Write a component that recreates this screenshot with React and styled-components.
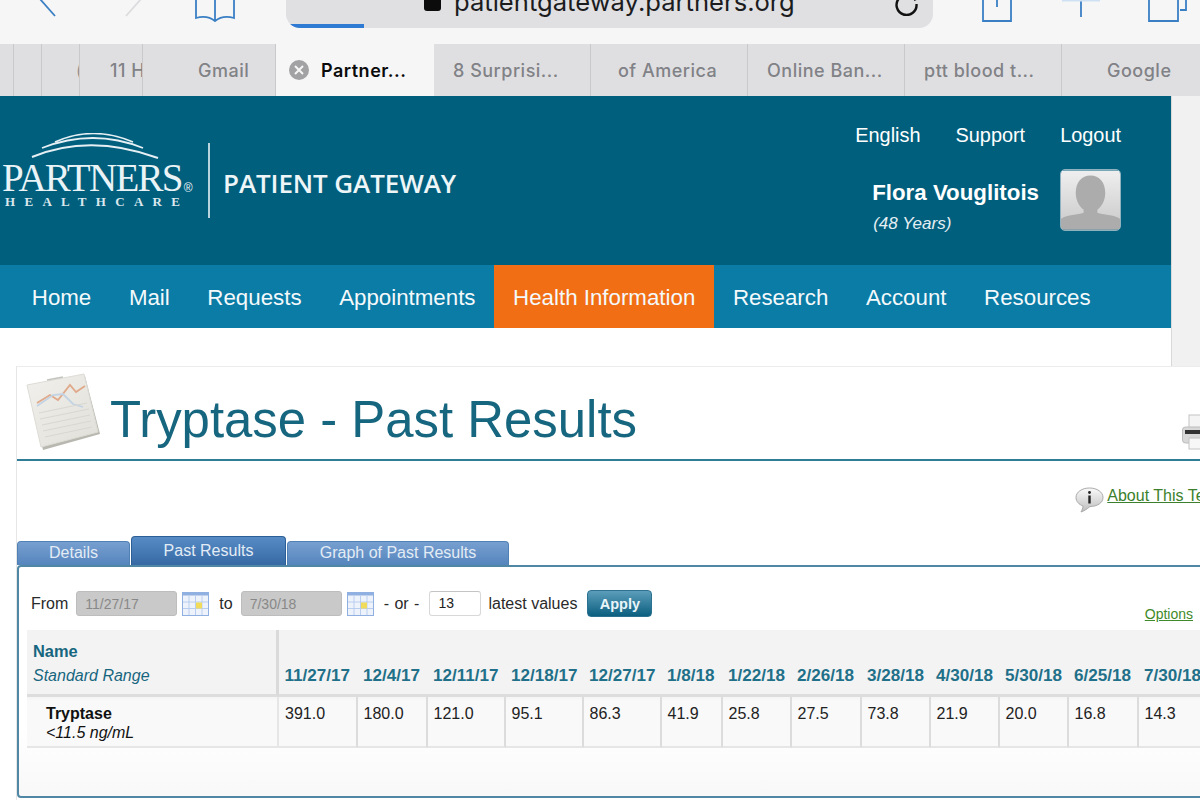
import React from "react";
import styled, { createGlobalStyle } from "styled-components";

const GlobalStyle = createGlobalStyle`
  html, body {
    margin: 0;
    width: 1200px;
    height: 800px;
    overflow: hidden;
    background: #f1f1f2;
    font-family: "Liberation Sans", Arial, sans-serif;
  }
`;

const Toolbar = styled.div`
  display: flex;
  height: 44px;
  overflow: hidden;
  background: #f6f6f7;
`;

const ToolIcon = styled.svg`
  flex: none;
  margin-left: ${(p) => p.$gap}px;
  fill: none;
  stroke: ${(p) => p.$stroke || "#3a7fc4"};
  stroke-width: 1.8;
`;

const UrlBar = styled.div`
  position: relative;
  flex: none;
  display: flex;
  align-items: flex-start;
  width: 647px;
  height: 28px;
  margin-left: 50px;
  overflow: hidden;
  background: #e0e0e3;
  border-radius: 0 0 14px 14px;
`;

const Lock = styled.span`
  width: 17px;
  height: 11px;
  margin-left: 138px;
  background: #0c0c0c;
  border-radius: 0 0 3px 3px;
`;

const UrlText = styled.span`
  margin: -13px 0 0 13px;
  font-family: Inter, "Liberation Sans", sans-serif;
  font-size: 25.6px;
  line-height: 30px;
  color: #1c1c1e;
`;

const Reload = styled.svg`
  margin: 0 0 0 100px;
  fill: none;
  stroke: #111;
  stroke-width: 2.4;
`;

const Progress = styled.span`
  position: absolute;
  left: 0;
  bottom: 0;
  width: 78px;
  height: 4px;
  background: #2f7bd3;
`;

const TabStrip = styled.div`
  display: flex;
  height: 52px;
  overflow: hidden;
  background: #dfdfe2;
`;

const BrowserTab = styled.div`
  flex: none;
  display: flex;
  align-items: center;
  box-sizing: border-box;
  width: ${(p) => p.$width}px;
  padding-left: ${(p) => p.$pad || 0}px;
  overflow: hidden;
  white-space: nowrap;
  border-right: 1px solid ${(p) => (p.$active ? "transparent" : "#c9c9cc")};
  background: ${(p) => (p.$active ? "#f6f6f7" : "transparent")};
  font-family: Inter, "Liberation Sans", sans-serif;
  font-size: 18px;
  font-weight: ${(p) => (p.$active ? 600 : 500)};
  letter-spacing: 0.5px;
  color: ${(p) => (p.$active ? "#0b0b0b" : "#818286")};
`;

const CloseDot = styled.svg`
  flex: none;
  margin-right: 12px;
`;

const ClippedGlyph = styled.span`
  margin-left: 34px;
  color: #8f8f93;
`;

const Sheet = styled.div`
  box-sizing: border-box;
  width: 1172px;
  height: 704px;
  border-right: 1px solid #d9d9d9;
  background: #fff;
`;

const Header = styled.header`
  display: flex;
  justify-content: space-between;
  height: 169px;
  background: #015f7e;
  color: #fff;
`;

const Brand = styled.div`
  display: flex;
  align-items: center;
`;

const BrandMark = styled.div`
  display: flex;
  flex-direction: column;
  width: 204px;
  padding: 0 0 19px 2px;
  box-sizing: content-box;
`;

const Arcs = styled.svg`
  margin-left: 29px;
  fill: none;
  stroke: #e6f0f4;
`;

const BrandName = styled.div`
  margin-top: 2px;
  font-family: "Liberation Serif", serif;
  font-size: 39px;
  line-height: 34px;
  letter-spacing: -1.7px;
  white-space: nowrap;
  color: #eaf3f6;

  sup {
    font-family: "Liberation Sans", sans-serif;
    font-size: 12px;
    letter-spacing: 0;
    line-height: 0;
    vertical-align: -1px;
    margin-left: 2px;
  }
`;

const BrandSub = styled.div`
  margin-left: 3px;
  font-family: "Liberation Serif", serif;
  font-size: 13px;
  font-weight: 700;
  line-height: 14px;
  letter-spacing: 9.3px;
  white-space: nowrap;
  color: #dbe8ed;
`;

const BrandRule = styled.div`
  width: 2px;
  height: 75px;
  margin-left: 2px;
  background: #b9d3dc;
`;

const BrandTitle = styled.div`
  margin: 4px 0 0 13px;
  font-family: "Open Sans", sans-serif;
  font-size: 26px;
  font-weight: 600;
  letter-spacing: -0.1px;
  white-space: nowrap;
  color: #eef6f8;
`;

const Account = styled.div`
  display: flex;
  flex-direction: column;
  align-items: flex-end;
  padding: 27px 50px 0 0;
`;

const AccountLinks = styled.div`
  display: flex;
  gap: 35px;
  font-size: 19.9px;
  line-height: 24px;
`;

const UserRow = styled.div`
  display: flex;
  gap: 21px;
  margin-top: 22px;
`;

const UserText = styled.div`
  padding-top: 10px;
`;

const UserName = styled.div`
  font-size: 22.3px;
  line-height: 28px;
  font-weight: 700;
`;

const UserAge = styled.div`
  margin: 7px 0 0 1px;
  font-size: 17px;
  line-height: 20px;
  font-style: italic;
  color: #e5eff3;
`;

const Avatar = styled.svg`
  display: block;
  border: 1px solid #8fb2c0;
  border-radius: 5px;
`;

const Nav = styled.nav`
  display: flex;
  height: 63px;
  padding-left: 13px;
  background: #0a7ca6;
`;

const NavItem = styled.a`
  display: flex;
  align-items: center;
  padding: 2px 18.8px 0;
  font-size: 22.3px;
  color: #f4f9fb;
  background: ${(p) => (p.$active ? "#f26e14" : "transparent")};
`;

const Panel = styled.main`
  box-sizing: border-box;
  width: 1240px;
  height: 440px;
  margin: 38px 0 0 16px;
  border-top: 1px solid #ececec;
  border-left: 1px solid #e6e6e6;
  background: #fff;
`;

const TitleRow = styled.div`
  display: flex;
  align-items: center;
  height: 92px;
  padding: 0 34px 0 8px;
  border-bottom: 2px solid #2f7d96;
  box-sizing: content-box;
  margin-bottom: -1px;
`;

const Title = styled.h1`
  margin: 12px 0 0 9px;
  font-size: 50.9px;
  font-weight: 400;
  color: #17667f;
`;

const Printer = styled.svg`
  margin: 38px 0 0 auto;
`;

const AboutRow = styled.div`
  display: flex;
  justify-content: flex-end;
  align-items: center;
  gap: 3px;
  box-sizing: border-box;
  height: 75px;
  padding: 4px 39px 0 0;
`;

const AboutLink = styled.a`
  margin-top: -7px;
  font-size: 16px;
  color: #3c7f2c;
  text-decoration: underline;
`;

const TabRow = styled.div`
  display: flex;
  align-items: flex-end;
  gap: 1px;
  height: 30px;
`;

const PageTab = styled.div`
  box-sizing: border-box;
  width: ${(p) => p.$width}px;
  height: ${(p) => (p.$active ? 29 : 24)}px;
  padding-top: ${(p) => (p.$active ? 5 : 2)}px;
  text-align: center;
  font-size: 16px;
  line-height: 18px;
  color: #e3ecf5;
  border: 1px solid ${(p) => (p.$active ? "#2c5f95" : "#4f81b5")};
  border-bottom: 0;
  border-radius: 4px 4px 0 0;
  background: ${(p) =>
    p.$active
      ? "linear-gradient(#568bc5, #376aa5)"
      : "linear-gradient(#779fd0, #5585bd)"};
`;

const ResultsBox = styled.section`
  box-sizing: border-box;
  height: 233px;
  border: 2px solid #4f87a5;
  border-radius: 4px;
  background: linear-gradient(#fff 70%, #f8f8f8);
`;

const FilterRow = styled.div`
  display: flex;
  align-items: center;
  width: 1174px;
  height: 63px;
  padding: 10px 0 0 12px;
  box-sizing: border-box;
  font-size: 16px;
  color: #2a2a2a;
`;

const DateField = styled.div`
  box-sizing: border-box;
  width: 101px;
  height: 25px;
  margin: 0 5px 0 8px;
  padding-left: 8px;
  font-size: 14px;
  line-height: 25px;
  color: #888;
  background: #c9c9c9;
  border: 1px solid #bdbdbd;
  border-radius: 3px;
`;

const CalendarIcon = styled.svg`
  flex: none;
  margin-right: 10px;
`;

const OrLabel = styled.span`
  word-spacing: 1px;
`;

const CountField = styled.div`
  box-sizing: border-box;
  width: 52px;
  height: 25px;
  margin: 0 7px 0 10px;
  padding-left: 8px;
  font-size: 14px;
  line-height: 23px;
  color: #222;
  background: #fff;
  border: 1px solid #d8d8d8;
  border-top-color: #c4c4c4;
  border-radius: 3px;
`;

const ApplyButton = styled.button`
  width: 65px;
  height: 27px;
  margin-left: 10px;
  padding: 0;
  font-family: inherit;
  font-size: 14.5px;
  font-weight: 700;
  color: #e9f5f9;
  background: linear-gradient(#5b9dba, #0c5f80);
  border: 1px solid #2c7190;
  border-radius: 4px;
`;

const OptionsLink = styled.a`
  margin: 20px 0 0 auto;
  font-size: 14px;
  color: #3f8a2a;
  text-decoration: underline;
`;

const ResultsGrid = styled.div`
  display: grid;
  grid-template-columns: 252px 78.5px 70px 78px 78px 78px 61px 69px 70px 69px 69px 69px 70px 81px;
  grid-template-rows: 67px 51px;
  margin-left: 8px;
  background: linear-gradient(#f3f3f4 56%, #f9f9f9 60%);
`;

const HeadName = styled.div`
  box-sizing: border-box;
  padding: 10px 0 0 6px;
  font-size: 16px;
  line-height: 22px;
  color: #17667f;
  border-right: 3px solid #dadada;
  border-bottom: 3px solid #dddddd;

  strong,
  em {
    display: block;
  }
  strong {
    font-size: 16.4px;
  }
  em {
    margin-top: 3px;
  }
`;

const HeadDate = styled.div`
  box-sizing: border-box;
  padding: 35px 0 0 5.5px;
  font-size: 17.1px;
  line-height: 22px;
  font-weight: 700;
  white-space: nowrap;
  color: #1f7088;
  border-bottom: 3px solid #dddddd;
`;

const RowName = styled.div`
  box-sizing: border-box;
  padding: 7px 0 0 19px;
  font-size: 16px;
  line-height: 19px;
  color: #111;
  border-right: 2px solid #e6e6e6;
  border-bottom: 2px solid #e6e6e6;

  strong,
  em {
    display: block;
  }
`;

const RowValue = styled.div`
  box-sizing: border-box;
  padding: 7px 0 0 6px;
  font-size: 16px;
  line-height: 19px;
  color: #222;
  border-right: ${(p) => (p.$last ? "0" : "2px solid #dcdcdc")};
  border-bottom: 2px solid #e6e6e6;
`;

const browserTabs = [
  { width: 14 },
  { width: 28 },
  { width: 38, glyph: "(" },
  { width: 63, label: "11 H", pad: 30 },
  { width: 133, label: "Gmail", pad: 55 },
  { width: 158, label: "Partner...", active: true, pad: 13 },
  { width: 157, label: "8 Surprisi...", pad: 19 },
  { width: 157, label: "of America", pad: 27 },
  { width: 157, label: "Online Ban...", pad: 19 },
  { width: 157, label: "ptt blood t...", pad: 19 },
  { width: 158, label: "Google", pad: 45 },
];

const navItems = ["Home", "Mail", "Requests", "Appointments", "Health Information", "Research", "Account", "Resources"];

const results = [
  ["11/27/17", "391.0"],
  ["12/4/17", "180.0"],
  ["12/11/17", "121.0"],
  ["12/18/17", "95.1"],
  ["12/27/17", "86.3"],
  ["1/8/18", "41.9"],
  ["1/22/18", "25.8"],
  ["2/26/18", "27.5"],
  ["3/28/18", "73.8"],
  ["4/30/18", "21.9"],
  ["5/30/18", "20.0"],
  ["6/25/18", "16.8"],
  ["7/30/18", "14.3"],
];

const Calendar = () => (
  <CalendarIcon width="27" height="24" viewBox="0 0 27 24">
    <rect x="0.5" y="0.5" width="26" height="23" fill="#eef3fb" stroke="#8fb0e0" />
    <rect x="0.5" y="0.5" width="26" height="3" fill="#8fb0e0" />
    <path d="M7 4v19M13.5 4v19M20 4v19M1 10h25M1 16.5h25" stroke="#b9cdee" strokeWidth="1" />
    <rect x="14" y="10.5" width="6" height="6" fill="#f0dc5a" />
  </CalendarIcon>
);

const App = () => (
  <>
    <GlobalStyle />
    <Toolbar>
      <ToolIcon $gap={38} width="18" height="18" viewBox="0 0 18 18">
        <path d="M2 -1 17 16" />
      </ToolIcon>
      <ToolIcon $gap={69} $stroke="#dcdcde" width="18" height="18" viewBox="0 0 18 18">
        <path d="M16 -1 1 16" />
      </ToolIcon>
      <ToolIcon $gap={51} width="42" height="24" viewBox="0 0 42 24">
        <path d="M2 0v18c7-2 14-1 19 3 5-4 12-5 19-3V0M21 0v21" />
      </ToolIcon>
      <UrlBar>
        <Lock />
        <UrlText>patientgateway.partners.org</UrlText>
        <Reload width="26" height="16" viewBox="0 0 26 16">
          <path d="M21.5 5a10 10 0 1 1-1-3.5" transform="translate(0 -1)" />
        </Reload>
        <Progress />
      </UrlBar>
      <ToolIcon $gap={49} width="30" height="22" viewBox="0 0 30 22">
        <path d="M1 0v21h28V0M15 0v7" />
      </ToolIcon>
      <ToolIcon $gap={50} width="38" height="18" viewBox="0 0 38 18">
        <path d="M19 0v17" />
        <path d="M0 0h38" stroke="#cfe0f2" strokeWidth="3" />
      </ToolIcon>
      <ToolIcon $gap={48} width="40" height="22" viewBox="0 0 40 22">
        <path d="M1 0v21h29V0M38 0v10h-6" />
      </ToolIcon>
    </Toolbar>
    <TabStrip>
      {browserTabs.map((tab, i) => (
        <BrowserTab key={i} $width={tab.width} $active={tab.active} $pad={tab.pad}>
          {tab.active && (
            <CloseDot width="20" height="20" viewBox="0 0 20 20">
              <circle cx="10" cy="10" r="10" fill="#a2a2a5" />
              <path d="M6 6l8 8M14 6l-8 8" stroke="#f6f6f7" strokeWidth="2" />
            </CloseDot>
          )}
          {tab.glyph && <ClippedGlyph>{tab.glyph}</ClippedGlyph>}
          {tab.label}
        </BrowserTab>
      ))}
    </TabStrip>
    <Sheet>
      <Header>
        <Brand>
          <BrandMark>
            <Arcs width="128" height="26" viewBox="0 0 128 26">
              <path d="M1 24Q59 0 127 25" strokeWidth="2" />
              <path d="M11 15Q62 -5 112 15" strokeWidth="1.8" />
              <path d="M24 9Q62 -8 102 9" strokeWidth="1.6" />
            </Arcs>
            <BrandName>
              PARTNERS<sup>®</sup>
            </BrandName>
            <BrandSub>HEALTHCARE</BrandSub>
          </BrandMark>
          <BrandRule />
          <BrandTitle>PATIENT GATEWAY</BrandTitle>
        </Brand>
        <Account>
          <AccountLinks>
            <span>English</span>
            <span>Support</span>
            <span>Logout</span>
          </AccountLinks>
          <UserRow>
            <UserText>
              <UserName>Flora Vouglitois</UserName>
              <UserAge>(48 Years)</UserAge>
            </UserText>
            <Avatar width="59" height="60" viewBox="0 0 60 60">
              <defs>
                <linearGradient id="avatarBg" x1="0" y1="0" x2="0" y2="1">
                  <stop offset="0" stopColor="#efefef" />
                  <stop offset="1" stopColor="#c8c8c8" />
                </linearGradient>
              </defs>
              <rect width="60" height="60" fill="url(#avatarBg)" />
              <path
                d="M30 5c9 0 15 7 15 18 0 8-4 14-8 17v3c6 2 16 2 23 6v11H0V49c7-4 17-4 23-6v-3c-4-3-8-9-8-17C15 12 21 5 30 5z"
                fill="#adacad"
              />
            </Avatar>
          </UserRow>
        </Account>
      </Header>
      <Nav>
        {navItems.map((item) => (
          <NavItem key={item} $active={item === "Health Information"}>
            {item}
          </NavItem>
        ))}
      </Nav>
      <Panel>
        <TitleRow>
          <svg width="76" height="80" viewBox="0 0 76 80">
            <defs>
              <linearGradient id="paper" x1="0" y1="0" x2="1" y2="1">
                <stop offset="0" stopColor="#f1f0ec" />
                <stop offset="1" stopColor="#e0dfd8" />
              </linearGradient>
            </defs>
            <path d="M4 15 60 3l15 58-57 16z" fill="#b9b8b0" />
            <path d="M2 12 59 1l14 58-57 15z" fill="url(#paper)" stroke="#dddcd6" />
            <path d="M12 30 25 22l8 5 12-15 6 7 9-6" fill="none" stroke="#e0a98a" strokeWidth="1.8" />
            <path d="M12 33 28 22l10-1 10 10 10 3" fill="none" stroke="#c3d3e4" strokeWidth="1.8" />
            <path
              d="M14 40 62 30M15 46 64 36M17 52 65 42M18 58 66 48M20 64 67 54"
              stroke="#d8d7d0"
              strokeWidth="1"
            />
            <path d="M22 7 38 4" stroke="#c4c4be" strokeWidth="1.5" />
          </svg>
          <Title>Tryptase - Past Results</Title>
          <Printer width="40" height="36" viewBox="0 0 40 36">
            <rect x="7" y="1" width="28" height="14" fill="#f4f4f4" stroke="#c4c4c4" />
            <rect x="0.5" y="13" width="38" height="16" rx="3" fill="#d8d8d8" stroke="#bcbcbc" />
            <rect x="3" y="16" width="34" height="4" fill="#333" />
            <rect x="7" y="24" width="28" height="11" fill="#f7f7f7" stroke="#c4c4c4" />
          </Printer>
        </TitleRow>
        <AboutRow>
          <svg width="29" height="26" viewBox="0 0 29 26">
            <defs>
              <linearGradient id="bubble" x1="0" y1="0" x2="0" y2="1">
                <stop offset="0" stopColor="#fafafa" />
                <stop offset="1" stopColor="#bdbdbd" />
              </linearGradient>
            </defs>
            <path
              d="M14.5 1C22 1 28 5 28 10.500S22 19.500 15 19.500C12 22 9 24 6 25c1-2 2-4 2-6C4 17.500 1 14.500 1 10.500 1 5 7 1 14.500 1z"
              fill="url(#bubble)"
              stroke="#aaa"
            />
            <circle cx="14.500" cy="5.500" r="1.400" fill="#222" />
            <path d="M14.500 8.500v8" stroke="#222" strokeWidth="2.400" />
          </svg>
          <AboutLink>About This Test</AboutLink>
        </AboutRow>
        <TabRow>
          <PageTab $width={113}>Details</PageTab>
          <PageTab $width={155} $active>
            Past Results
          </PageTab>
          <PageTab $width={222}>Graph of Past Results</PageTab>
        </TabRow>
        <ResultsBox>
          <FilterRow>
            From
            <DateField>11/27/17</DateField>
            <Calendar />
            to
            <DateField>7/30/18</DateField>
            <Calendar />
            <OrLabel>- or -</OrLabel>
            <CountField>13</CountField>
            latest values
            <ApplyButton>Apply</ApplyButton>
            <OptionsLink>Options</OptionsLink>
          </FilterRow>
          <ResultsGrid>
            <HeadName>
              <strong>Name</strong>
              <em>Standard Range</em>
            </HeadName>
            {results.map(([date]) => (
              <HeadDate key={date}>{date}</HeadDate>
            ))}
            <RowName>
              <strong>Tryptase</strong>
              <em>&lt;11.5 ng/mL</em>
            </RowName>
            {results.map(([date, value], i) => (
              <RowValue key={date} $last={i === results.length - 1}>
                {value}
              </RowValue>
            ))}
          </ResultsGrid>
        </ResultsBox>
      </Panel>
    </Sheet>
  </>
);

export default App;
